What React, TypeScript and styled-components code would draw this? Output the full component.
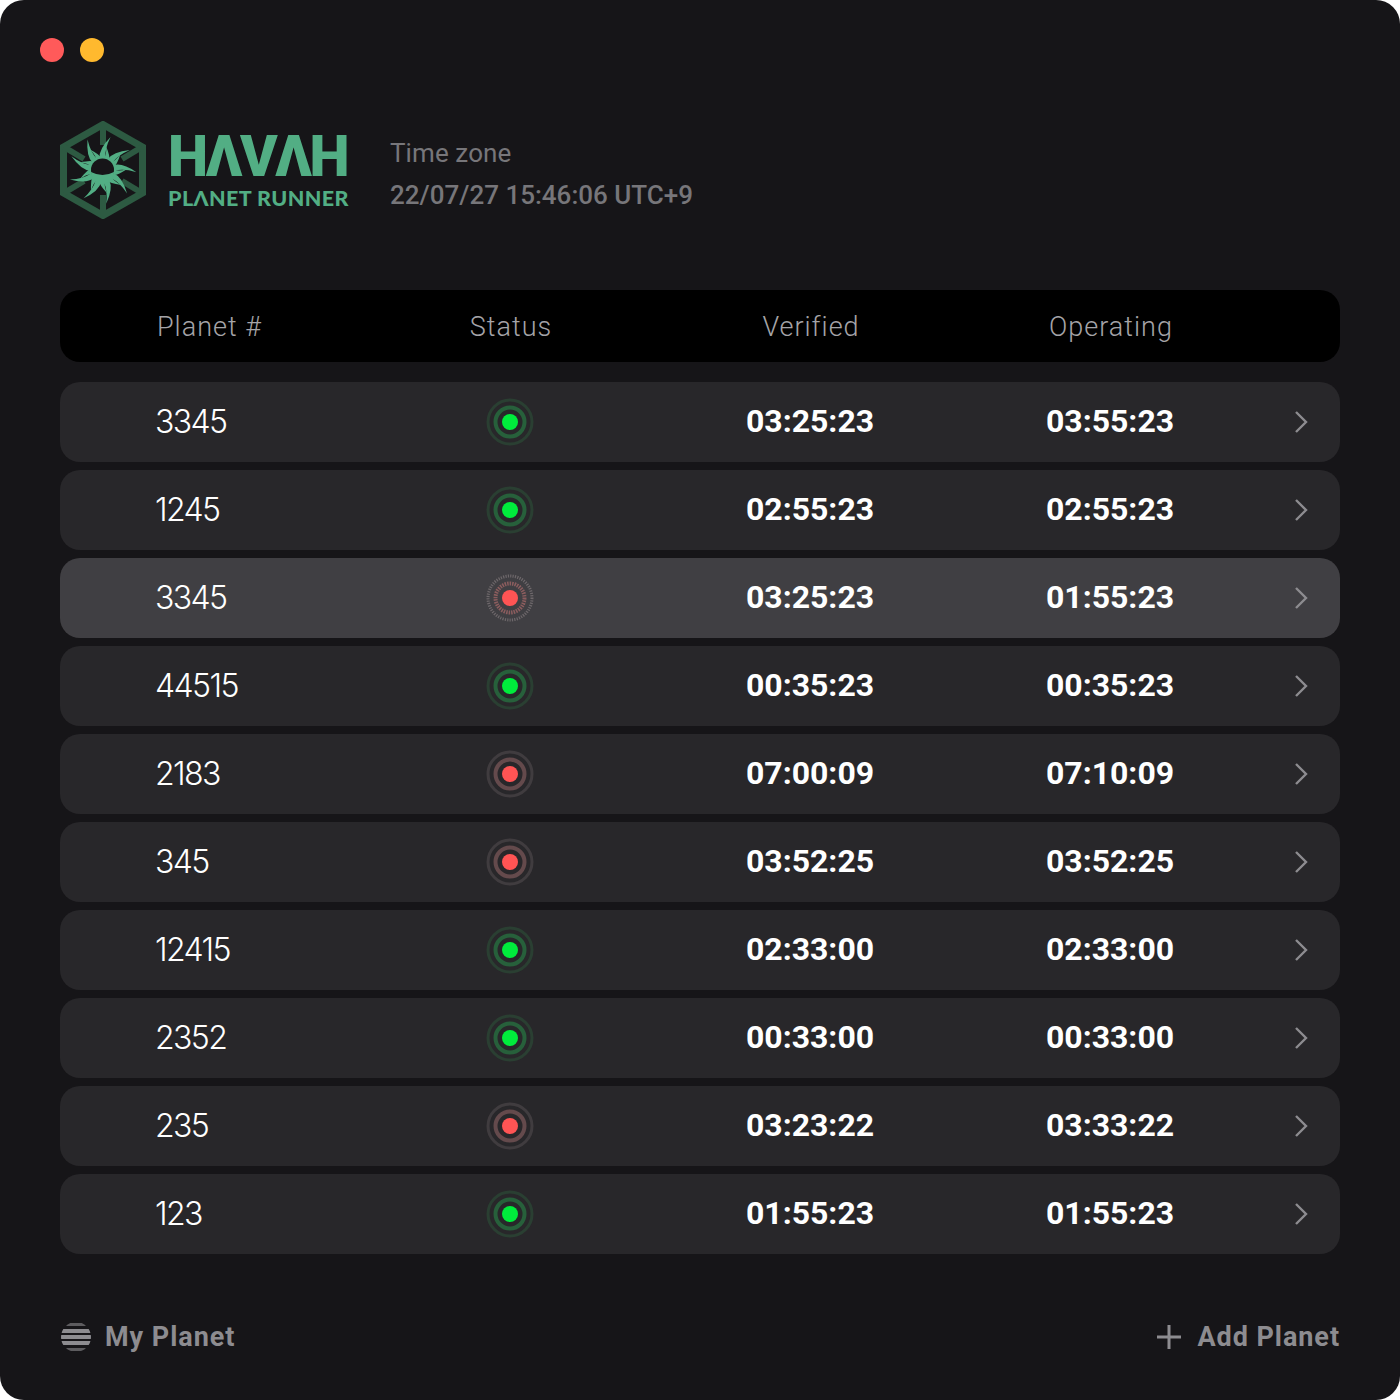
import React from "react";
import styled, { createGlobalStyle } from "styled-components";

const Global = createGlobalStyle`
  html, body { margin: 0; padding: 0; background: #ffffff; }
  body { font-family: Roboto, "Noto Sans", sans-serif; }
`;

const Window = styled.div`
  width: 1400px;
  height: 1400px;
  box-sizing: border-box;
  background: #161518;
  border-radius: 24px;
  padding: 38px 60px 0;
  display: flex;
  flex-direction: column;
`;
const Lights = styled.div`
  display: flex;
  gap: 16px;
  margin-left: -20px;
`;
const Light = styled.span<{ $c: string }>`
  width: 24px;
  height: 24px;
  border-radius: 50%;
  background: ${(p) => p.$c};
`;
const Header = styled.header`
  display: flex;
  align-items: center;
  margin-top: 59px;
  height: 98px;
`;
const Brand = styled.div`
  display: flex;
  flex-direction: column;
  margin: 1px 0 0 21px;
  width: 200px;
  color: #52ae84;
`;
const Word = styled.div`
  font-family: Roboto, sans-serif;
  font-weight: 900;
  font-size: 57px;
  line-height: 50px;
  letter-spacing: -2.4px;
  white-space: nowrap;
`;
const Sub = styled.div`
  font-family: Lato, sans-serif;
  font-weight: 900;
  font-size: 21.5px;
  line-height: 22px;
  margin-top: 5px;
  letter-spacing: 0.4px;
  white-space: nowrap;
`;
const Zone = styled.div`
  margin: 8px 0 0 22px;
  display: flex;
  flex-direction: column;
  gap: 14px;
`;
const ZoneLabel = styled.div`
  font-size: 26px;
  line-height: 28px;
  color: #77767a;
  letter-spacing: 0.1px;
`;
const ZoneValue = styled.div`
  font-size: 26px;
  line-height: 28px;
  font-weight: 500;
  color: #77767a;
`;
const Cols = `
  display: grid;
  grid-template-columns: 300px 300px 300px 300px 1fr;
  align-items: center;
  justify-items: center;
`;
const TableHead = styled.div`
  ${Cols}
  margin-top: 71px;
  height: 72px;
  padding-top: 2px;
  box-sizing: border-box;
  background: #000;
  border-radius: 20px;
  color: #a5a4a8;
  font-size: 27px;
  font-weight: 300;
  letter-spacing: 1px;
`;
const HeadCell = styled.div<{ $first?: boolean }>`
  padding-left: ${(p) => (p.$first ? "97px" : "2px")};
  ${(p) => (p.$first ? "justify-self: start;" : "")}
`;
const Rows = styled.div`
  margin-top: 20px;
  display: flex;
  flex-direction: column;
  gap: 8px;
`;
const Row = styled.div<{ $active?: boolean }>`
  ${Cols}
  height: 80px;
  border-radius: 20px;
  background: ${(p) => (p.$active ? "#403f43" : "#28272a")};
`;
const Num = styled.div`
  justify-self: start;
  padding: 0 0 2px 95px;
  font-family: Inter, sans-serif;
  font-size: 32px;
  font-weight: 350;
  letter-spacing: -1.6px;
  color: #fff;
`;
const Time = styled.div`
  padding-bottom: 2px;
  font-size: 32px;
  font-weight: 700;
  color: #fff;
`;
const Chevron = styled.svg`
  justify-self: end;
  margin-right: 32px;
`;
const Footer = styled.footer`
  margin-top: 67px;
  display: flex;
  justify-content: space-between;
  align-items: center;
  color: #8d8c90;
  font-size: 27px;
  font-weight: 700;
  letter-spacing: 0.95px;
`;
const FootItem = styled.div<{ $gap: number }>`
  display: flex;
  align-items: center;
  gap: ${(p) => p.$gap}px;
`;
const StatusSvg = styled.svg`
  display: block;
`;

function Logo() {
  const rays: React.ReactNode[] = [];
  const n = 18;
  const cx = 42.5;
  const cy = 49;
  for (let i = 0; i < n; i++) {
    const a = (i / n) * Math.PI * 2 - Math.PI / 2;
    const len = i % 2 === 0 ? 34 : 24;
    const w = 0.24;
    const p = (ang: number, r: number) => `${(cx + Math.cos(ang) * r).toFixed(1)} ${(cy + Math.sin(ang) * r).toFixed(1)}`;
    const bend = i % 2 === 0 ? 0.24 : -0.2;
    rays.push(
      <path
        key={i}
        d={`M${p(a - w, 12)}Q${p(a - w * 0.5 - bend * 0.3, len * 0.62)} ${p(a + bend, len)}Q${p(a + w * 0.7 - bend * 0.3, len * 0.62)} ${p(a + w, 12)}Z`}
        fill="#52ae84"
      />
    );
  }
  return (
    <svg width="87" height="98" viewBox="0 0 87 98" fill="none">
      <polygon points="43,3.5 82.5,26 82.5,72 43,94.5 3.5,72 3.5,26" stroke="#2d5a42" strokeWidth="7" />
      <path d="M43 4V24M43 74V94M4 26L24 38M82 26L62 38M4 72L24 60M82 72L62 60" stroke="#2d5a42" strokeWidth="6" />
      {rays}
      <circle cx={cx} cy={cy} r="13" fill="#52ae84" />
      <circle cx={cx} cy={cy} r="11.5" fill="#161518" />
      <path d={`M${cx - 11.5} ${cy + 2}Q${cx} ${cy + 8} ${cx + 11.5} ${cy + 2}A11.5 11.5 0 0 1 ${cx - 11.5} ${cy + 2}Z`} fill="#52ae84" />
    </svg>
  );
}

function Status({ on, active }: { on: boolean; active: boolean }) {
  const outer = on ? "#2a3f32" : active ? "#6e686b" : "#403c3f";
  const inner = on ? "#27603b" : active ? "#8c5d5e" : "#644a4c";
  return (
    <StatusSvg width="48" height="48" viewBox="0 0 48 48">
      <circle cx="24" cy="24" r="22" fill="none" stroke={outer} strokeWidth="3" strokeDasharray={active ? "1.2 1.2" : undefined} />
      <circle cx="24" cy="24" r="14.5" fill="none" stroke={inner} strokeWidth="4" strokeDasharray={active ? "1.5 1" : undefined} />
      <circle cx="24" cy="24" r="8" fill={on ? "#00ec3c" : "#ff5454"} />
    </StatusSvg>
  );
}

const data: [string, boolean, string, string][] = [
  ["3345", true, "03:25:23", "03:55:23"],
  ["1245", true, "02:55:23", "02:55:23"],
  ["3345", false, "03:25:23", "01:55:23"],
  ["44515", true, "00:35:23", "00:35:23"],
  ["2183", false, "07:00:09", "07:10:09"],
  ["345", false, "03:52:25", "03:52:25"],
  ["12415", true, "02:33:00", "02:33:00"],
  ["2352", true, "00:33:00", "00:33:00"],
  ["235", false, "03:23:22", "03:33:22"],
  ["123", true, "01:55:23", "01:55:23"],
];

export default function App() {
  return (
    <Window>
      <Global />
      <Lights>
        <Light $c="#ff5a5a" />
        <Light $c="#ffb92e" />
      </Lights>
      <Header>
        <Logo />
        <Brand>
          <Word>HΛVΛH</Word>
          <Sub>PLΛNET RUNNER</Sub>
        </Brand>
        <Zone>
          <ZoneLabel>Time zone</ZoneLabel>
          <ZoneValue>22/07/27 15:46:06 UTC+9</ZoneValue>
        </Zone>
      </Header>
      <TableHead>
        <HeadCell $first>Planet #</HeadCell>
        <HeadCell>Status</HeadCell>
        <HeadCell>Verified</HeadCell>
        <HeadCell>Operating</HeadCell>
      </TableHead>
      <Rows>
        {data.map((d, i) => (
          <Row key={i} $active={i === 2}>
            <Num>{d[0]}</Num>
            <Status on={d[1]} active={i === 2} />
            <Time>{d[2]}</Time>
            <Time>{d[3]}</Time>
            <Chevron width="14" height="24" viewBox="0 0 14 24" fill="none">
              <path d="M2 2L12 12L2 22" stroke="#8d8c90" strokeWidth="2.4" />
            </Chevron>
          </Row>
        ))}
      </Rows>
      <Footer>
        <FootItem $gap={13}>
          <svg width="32" height="32" viewBox="0 0 32 32">
            <defs>
              <clipPath id="planetClip">
                <circle cx="16" cy="16" r="15" />
              </clipPath>
            </defs>
            <g fill="#8d8c90" clipPath="url(#planetClip)">
              <rect x="0" y="2" width="32" height="3" opacity="0.6" />
              <rect x="0" y="8" width="32" height="4" />
              <rect x="0" y="14" width="32" height="4" />
              <rect x="0" y="20" width="32" height="4" />
              <rect x="0" y="27" width="32" height="3" opacity="0.6" />
            </g>
          </svg>
          My Planet
        </FootItem>
        <FootItem $gap={16}>
          <svg width="24" height="24" viewBox="0 0 24 24">
            <path d="M12 0V24M0 12H24" stroke="#8d8c90" strokeWidth="3" />
          </svg>
          Add Planet
        </FootItem>
      </Footer>
    </Window>
  );
}
